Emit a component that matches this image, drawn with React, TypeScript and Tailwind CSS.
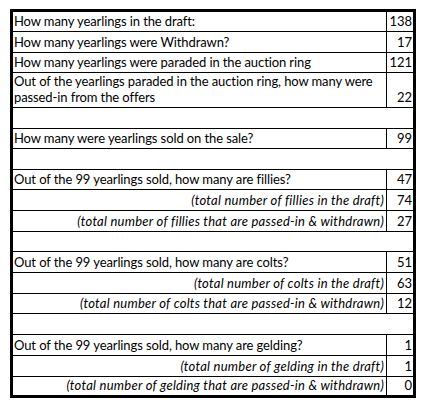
type Row =
  | { kind: 'blank'; h: number }
  | { kind: 'data'; h: number; label: React.ReactNode; value: string; italic?: boolean; last?: boolean }

const ROWS: Row[] = [
  { kind: 'data', h: 20, label: 'How many yearlings in the draft:', value: '138' },
  { kind: 'data', h: 21, label: 'How many yearlings were Withdrawn?', value: '17' },
  { kind: 'data', h: 20, label: 'How many yearlings were paraded in the auction ring', value: '121' },
  {
    kind: 'data',
    h: 35,
    label: (
      <>
        Out of the yearlings paraded in the auction ring, how many were
        <br />
        passed-in from the offers
      </>
    ),
    value: '22',
  },
  { kind: 'blank', h: 21 },
  { kind: 'data', h: 20, label: 'How many were yearlings sold on the sale?', value: '99' },
  { kind: 'blank', h: 21 },
  { kind: 'data', h: 20, label: 'Out of the 99 yearlings sold, how many are fillies?', value: '47' },
  { kind: 'data', h: 21, label: '(total number of fillies in the draft)', value: '74', italic: true },
  { kind: 'data', h: 21, label: '(total number of fillies that are passed-in & withdrawn)', value: '27', italic: true },
  { kind: 'blank', h: 20 },
  { kind: 'data', h: 21, label: 'Out of the 99 yearlings sold, how many are colts?', value: '51' },
  { kind: 'data', h: 21, label: '(total number of colts in the draft)', value: '63', italic: true },
  { kind: 'data', h: 20, label: '(total number of colts that are passed-in & withdrawn)', value: '12', italic: true },
  { kind: 'blank', h: 21 },
  { kind: 'data', h: 21, label: 'Out of the 99 yearlings sold, how many are gelding?', value: '1' },
  { kind: 'data', h: 21, label: '(total number of gelding in the draft)', value: '1', italic: true },
  {
    kind: 'data',
    h: 18,
    label: '(total number of gelding that are passed-in & withdrawn)',
    value: '0',
    italic: true,
    last: true,
  },
]

function DataRow({ row }: { row: Extract<Row, { kind: 'data' }> }) {
  return (
    <div
      className={`flex ${row.last ? '' : 'border-b border-black'}`}
      style={{ height: row.h }}
    >
      <div
        className={`flex flex-1 items-end whitespace-nowrap border-r border-black pb-[2px] pl-[1px] pr-[2px] ${
          row.italic ? 'justify-end italic tracking-[0.25px]' : 'tracking-[-0.1px]'
        }`}
      >
        <span>{row.label}</span>
      </div>
      <div className="flex w-[26px] items-end justify-end pb-[2px] pr-[1px]">{row.value}</div>
    </div>
  )
}

export default function App() {
  return (
    <div className="min-h-[406px] bg-white pl-[10px] pt-[9px] font-['Lato','Liberation_Sans',sans-serif] text-[13px] leading-[16px] text-black">
      <div className="w-[406px] border-[3px] border-black">
        {ROWS.map((row, i) =>
          row.kind === 'blank' ? (
            <div key={i} className="border-b border-black" style={{ height: row.h }} />
          ) : (
            <DataRow key={i} row={row} />
          ),
        )}
      </div>
    </div>
  )
}
